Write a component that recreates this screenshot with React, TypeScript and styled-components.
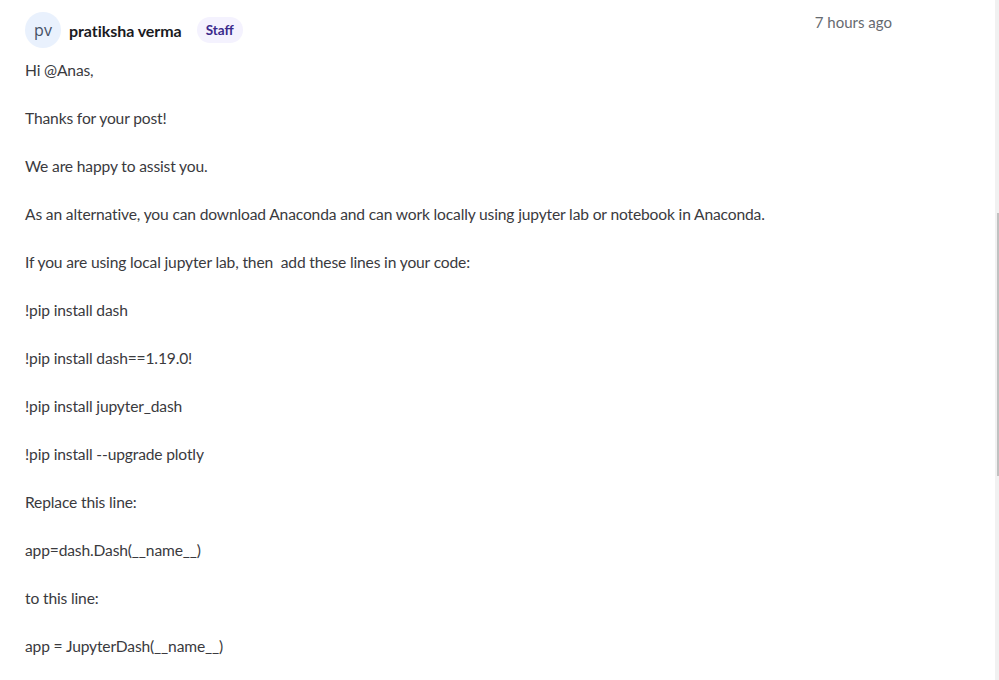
import React from "react";
import styled, { createGlobalStyle } from "styled-components";

const Global = createGlobalStyle`
  html, body { margin: 0; padding: 0; background: #ffffff; }
  body { font-family: Lato, "Noto Sans", sans-serif; overflow: hidden; }
`;

const Page = styled.div`
  display: flex;
  height: 100vh;
  background: #ffffff;
`;

const Thread = styled.main`
  flex: 1;
  min-width: 0;
  overflow: hidden;
`;

const ScrollRail = styled.div`
  width: 4px;
  flex-shrink: 0;
  background: #f1f1f1;
  padding-top: 213px;
  box-sizing: border-box;
`;

const ScrollThumb = styled.div`
  width: 2px;
  height: 263px;
  margin-left: 2px;
  background: #c1c1c1;
`;

const Post = styled.article`
  padding: 12px 103px 0 25px;
`;

const PostHeader = styled.header`
  display: flex;
  justify-content: space-between;
  align-items: flex-start;
`;

const Author = styled.div`
  display: flex;
  align-items: center;
`;

const Avatar = styled.div`
  width: 36px;
  height: 36px;
  border-radius: 50%;
  background: #e9f1fd;
  color: #465266;
  display: flex;
  align-items: center;
  justify-content: center;
  font-size: 16px;
  font-family: "Open Sans", sans-serif;
  margin-right: 8px;
`;

const Name = styled.span`
  font-weight: 700;
  font-size: 16px;
  color: #1b1b1f;
  letter-spacing: -0.05px;
  margin-right: 15px;
`;

const Badge = styled.span`
  height: 26px;
  padding: 0 9px;
  border-radius: 13px;
  background: #f4f2fe;
  color: #3a2a8c;
  font-weight: 700;
  font-size: 13.5px;
  display: flex;
  align-items: center;
`;

const Timestamp = styled.time`
  font-size: 15px;
  line-height: 20px;
  color: #666a70;
`;

const Body = styled.div`
  margin-top: 10px;
  color: #3a3a3e;
  font-size: 15.6px;
  line-height: 24px;
  letter-spacing: -0.15px;
`;

const Para = styled.p`
  margin: 0 0 24px;
`;

const paragraphs = [
  "Hi @Anas,",
  "Thanks for your post!",
  "We are happy to assist you.",
  "As an alternative, you can download Anaconda and can work locally using jupyter lab or notebook in Anaconda.",
  "If you are using local jupyter lab, then\u00a0 add these lines in your code:",
  "!pip install dash",
  "!pip install dash==1.19.0!",
  "!pip install jupyter_dash",
  "!pip install --upgrade plotly",
  "Replace this line:",
  "app=dash.Dash(__name__)",
  "to this line:",
  "app = JupyterDash(__name__)",
];

export default function App() {
  return (
    <>
      <Global />
      <Page>
        <Thread>
          <Post>
            <PostHeader>
              <Author>
                <Avatar>pv</Avatar>
                <Name>pratiksha verma</Name>
                <Badge>Staff</Badge>
              </Author>
              <Timestamp>7 hours ago</Timestamp>
            </PostHeader>
            <Body>
              {paragraphs.map((p, i) => (
                <Para key={i}>{p}</Para>
              ))}
            </Body>
          </Post>
        </Thread>
        <ScrollRail>
          <ScrollThumb />
        </ScrollRail>
      </Page>
    </>
  );
}
